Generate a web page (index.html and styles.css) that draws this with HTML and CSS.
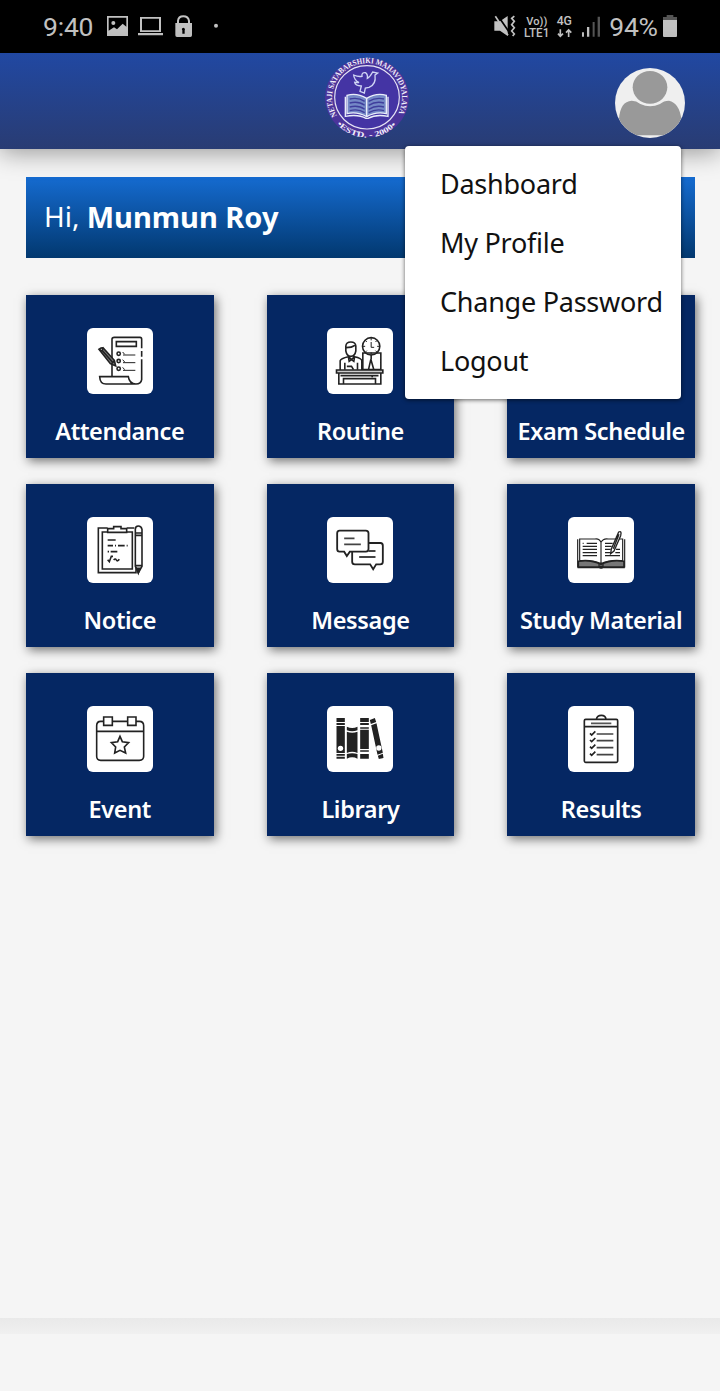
FILE: index.html
```html
<!DOCTYPE html>
<html lang="en">
<head>
<meta charset="utf-8">
<title>Student Dashboard</title>
<link rel="stylesheet" href="styles.css">
</head>
<body>
<div class="status">
  <span class="clock">9:40</span>
  <svg class="status-left" viewBox="300 0 360 156">
    <g fill="#c2c2c2">
      <path fill-rule="evenodd" d="M321 48H384V108H321ZM326 53V92L342 82L351 88L368 71L379 80V53Z"/>
      <circle cx="340" cy="69" r="6"/>
      <path fill-rule="evenodd" d="M420 51H483V96H420ZM426 56V91H477V56ZM414 99H489V106H414Z"/>
      <path fill-rule="evenodd" d="M526 69H531V62Q533 46 550 46T570 62V69H576V106Q576 111 571 111H531Q526 111 526 106ZM537 69H564V63Q562 52 550 52T537 63ZM547 91V101H554V91Q557 85 550 83Q543 85 547 91Z"/>
      <circle cx="648" cy="77" r="6"/>
    </g>
  </svg>
  <svg class="status-right" viewBox="30 0 340 156">
    <g fill="#c2c2c2">
      <path d="M43 64H60L83 48V108L60 92H43Z"/>
      <path d="M50 42L90 100" stroke="#000" stroke-width="5"/>
      <path d="M46 49L84 106" stroke="#c2c2c2" stroke-width="5"/>
      <path d="M103 48L95 55L103 64L95 74L103 83L95 93L103 102L98 108" fill="none" stroke="#c2c2c2" stroke-width="5"/>
      <text class="net" x="139" y="74" font-size="34" textLength="63" lengthAdjust="spacingAndGlyphs">Vo))</text>
      <text class="net" x="132" y="110" font-size="36" textLength="76" lengthAdjust="spacingAndGlyphs">LTE1</text>
      <text class="net" x="230" y="75" font-size="37" textLength="46" lengthAdjust="spacingAndGlyphs">4G</text>
      <path d="M241 88V108M234 101L241 109L249 101M266 111V91M258 98L266 90L274 98" fill="none" stroke="#c2c2c2" stroke-width="5"/>
      <path d="M306 97H312V110H306ZM321 81H328V110H321Z"/>
      <path fill="#555" d="M338 66H344V110H338ZM353 50H360V110H353Z"/>
    </g>
  </svg>
  <span class="percent">94%</span>
  <svg class="battery" viewBox="0 0 42 66"><path fill="#555" d="M11 0H31V6H42V17H0V6H11Z"/><path fill="#c2c2c2" d="M0 15H42V63Q42 66 39 66H3Q0 66 0 63Z"/></svg>
</div>

<header class="topbar">
  <svg class="logo" viewBox="42 20 258 246">
    <defs>
      <path id="arcTop" d="M81 196A105 104 0 1 1 261 196"/>
      <path id="arcBottom" d="M70 207A118 113 0 0 0 272 207"/>
    </defs>
    <ellipse cx="171" cy="142" rx="126" ry="119" fill="#4b349b"/>
    <ellipse cx="171" cy="141" rx="97" ry="95" fill="#4434a4" stroke="#e6e4f5" stroke-width="3.5"/>
    <text class="seal" font-size="24"><textPath href="#arcTop" textLength="432" lengthAdjust="spacingAndGlyphs">NETAJI SATABARSHIKI MAHAVIDYALAYA</textPath></text>
    <text class="seal" font-size="23"><textPath href="#arcBottom" startOffset="18" textLength="200" lengthAdjust="spacingAndGlyphs">•ESTD. - 2000•</textPath></text>
    <path d="M131 74Q144 80 156 78Q154 66 166 67Q174 72 172 84Q180 80 188 65L203 68L195 74Q199 103 177 111L166 113L163 128L150 123L154 107Q136 106 134 96L147 97Q132 88 131 74Z" fill="none" stroke="#cfd4f4" stroke-width="4"/>
    <path d="M111 135Q140 126 170 144Q200 126 229 135V190Q198 183 170 199Q142 183 111 190Z" fill="#7488c6" stroke="#e9edfa" stroke-width="4"/>
    <path d="M119 146Q145 140 164 153M119 158Q145 151 164 165M119 170Q145 163 164 177M119 181Q145 174 164 187M176 153Q198 140 222 146M176 165Q198 151 222 158M176 177Q198 163 222 170M176 187Q198 174 222 181" fill="none" stroke="#3f3e9c" stroke-width="4"/>
    <path d="M170 144V200M106 139V198Q145 191 168 204H174Q198 191 234 198V139" fill="none" stroke="#e9edfa" stroke-width="4"/>
  </svg>
  <div class="account">
    <svg class="avatar" viewBox="0 0 210 210">
      <clipPath id="face"><circle cx="105" cy="105" r="105"/></clipPath>
      <g clip-path="url(#face)"><rect width="210" height="210" fill="#efefef"/>
      <path d="M12 152Q16 100 50 98Q64 98 76 108Q105 122 135 108Q146 98 162 98Q192 104 199 152Q180 195 158 202H52Q22 184 12 152Z" fill="#999"/>
      <ellipse cx="105" cy="58" rx="52" ry="49" fill="#999"/></g>
    </svg>
    <nav class="menu">
      <a><span>Dashboard</span></a>
      <a><span>My Profile</span></a>
      <a><span>Change Password</span></a>
      <a><span>Logout</span></a>
    </nav>
  </div>
</header>

<main class="content">
  <div class="greeting">Hi,&nbsp;<b>Munmun Roy</b></div>
  <div class="grid">
    <section class="card">
      <svg class="icon" viewBox="21 22 198 198">
        <path d="M96 166V56Q96 50 103 50H180Q185 50 185 56V83M185 91V108M185 116V177Q183 190 168 190H78Q60 190 59 168H145Q148 190 168 190M109 63H169V77H109Z"/>
        <circle cx="116" cy="99" r="5"/><circle cx="116" cy="121" r="5"/><circle cx="116" cy="144" r="5"/>
        <path d="M129 103H166M129 126H166M129 149H166M128 94L134 101M128 117L134 124M128 140L134 147" stroke-width="3"/>
        <path class="shade" d="M57 86L69 81L103 119L107 136L91 129Z"/><path d="M62 84L99 126M94 130L104 120"/><circle cx="64" cy="86" r="4" fill="#fff"/>
      </svg><span>Attendance</span>
    </section>
    <section class="card">
      <svg class="icon" viewBox="22.5 22 198 198">
        <circle cx="155" cy="77" r="26"/><path d="M155 52V59M155 95V102M130 77H137M173 77H180M155 64V80H164M137 59L142 64M173 59L168 64M137 95L142 90M173 95L168 90" stroke-width="3"/>
        <path d="M79 76Q80 64 94 64T109 76V91Q106 107 94 107T79 91ZM80 81Q97 81 106 74M62 148V120Q64 113 86 108L96 117L105 108Q126 112 127 120V148M76 126V147M114 126V147M87 110L89 122L96 117L103 122L105 110M82 137H96L102 147"/>
        <path d="M130 97H184V147H130ZM147 147L154 116L163 147M155 116V102"/>
        <path fill="#ccc" d="M51 148H190V157H51Z"/><path d="M58 157V190H184V157M63 165H177M72 190V174H168V190M158 165V170"/>
      </svg><span>Routine</span>
    </section>
    <section class="card">
      <svg class="icon" viewBox="21 22 198 198"><path d="M72 52H168V190H72ZM88 80H150M88 105H150M88 130H150"/></svg><span>Exam Schedule</span>
    </section>
    <section class="card">
      <svg class="icon" viewBox="21 20 198 198">
        <path d="M83 53H55V187H168V171M140 53H163M83 65H67V176H157V65H140M83 66V55H101V49H123V55H140V66Z"/>
        <path d="M166 57Q166 47 175 47T186 57V168L175 188L166 168ZM166 68H186M166 75H186M166 166H186"/><path d="M171 174L180 174L175 188Z" fill="#222"/>
        <path d="M83 89H107M83 106H99M105 106H108M114 106H134M140 106H143M83 124H87M92 124H112M83 148L88 154L94 138H99M101 149Q106 143 109 149T118 147"/>
      </svg><span>Notice</span>
    </section>
    <section class="card">
      <svg class="icon" viewBox="22.5 20 198 198">
        <path d="M60 61H139Q147 61 147 69V116Q147 124 139 124H91L82 137L74 124H60Q53 124 53 116V69Q53 61 60 61ZM147 98H183Q190 98 190 106V154Q190 162 182 162H170L161 177L152 162H106Q98 162 98 154V124" stroke-width="5.5"/>
        <path d="M74 84H105M74 102H124M147 122H168M119 140H168" stroke="#444" stroke-width="5.5"/>
      </svg><span>Message</span>
    </section>
    <section class="card">
      <svg class="icon" viewBox="24 20 198 198">
        <path class="shade" d="M55 153Q90 146 123 162Q155 146 192 153V171H55Z"/>
        <path d="M53 87V170H117Q123 177 130 170H194V87M59 151V86H105Q118 84 123 96Q130 83 145 86H188V151M123 96V158M59 151Q100 148 123 160Q145 148 188 151M117 158H129V168H117Z" stroke-width="3.5"/>
        <path d="M68 99H71M80 99H111M68 108H111M68 117H111M68 127H111M68 136H111M135 99H158M135 108H155M135 117H152M168 117H180M135 127H152M166 127H180M135 136H180" stroke-width="3.5"/>
        <path fill="#fff" d="M176 65Q186 60 182 76L162 122L152 130L154 116ZM168 78L175 83M177 72L160 115" stroke-width="4"/>
      </svg><span>Study Material</span>
    </section>
    <section class="card">
      <svg class="icon" viewBox="21 18 198 198">
        <path d="M70 64H62Q50 64 50 77V169Q50 181 62 181H178Q191 181 191 169V77Q191 64 178 64H169M98 64H142M50 94H191M71 51H97V76H71ZM143 51H168V76H143Z"/>
        <path d="M120 109L127 125L146 128L133 141L137 159L120 151L104 159L107 141L94 128L113 125Z"/>
      </svg><span>Event</span>
    </section>
    <section class="card">
      <svg class="icon" viewBox="22.5 18 198 198">
        <g class="solid"><path d="M51 54H76V66H51ZM51 69H76V75H51ZM51 78H76V159H51ZM51 162H76V167H51ZM51 170H76V176H51Z"/><path d="M82 80Q98 88 114 80V91Q98 97 82 91ZM82 95Q98 101 114 95V159Q98 152 82 159ZM82 162Q98 157 114 162V176Q98 168 82 176Z"/><path d="M122 54H148V66H122ZM122 69H148V75H122ZM122 82H148V86H122ZM122 89H148V147H122ZM122 151H148V155H122ZM122 162H148V176H122Z"/><path d="M151 60L166 54L170 66L154 72ZM155 76L171 70L190 158L174 164ZM175 167L190 161L192 174L178 177Z"/></g>
        <circle cx="63" cy="145" r="8" fill="#fff" stroke="none"/><circle cx="178" cy="144" r="8" fill="#fff" stroke="none"/>
      </svg><span>Library</span>
    </section>
    <section class="card">
      <svg class="icon" viewBox="24 18 198 198">
        <path d="M77 58H169Q173 58 173 62V183Q173 187 169 187H77Q73 187 73 183V62Q73 58 77 58ZM73 80H173M109 58Q111 46 124 46T138 58" stroke-width="5"/>
        <path d="M93 70H154" stroke="#555"/><path d="M110 102H160M110 122H160M110 143H160M110 164H160" stroke="#444"/>
        <path d="M90 100L95 105L106 94M90 120L95 125L106 114M90 140L95 145L106 134M90 161L95 166L106 155" stroke-width="5"/>
      </svg><span>Results</span>
    </section>
  </div>
</main>
<footer class="footer"></footer>
</body>
</html>
```
FILE: styles.css
```css
* { box-sizing: border-box; }
body {
  margin: 0;
  width: 720px;
  height: 1391px;
  display: flex;
  flex-direction: column;
  overflow: hidden;
  background: #f5f5f5;
  font-family: "Noto Sans", "Open Sans", sans-serif;
}
.status {
  height: 52.5px;
  flex: none;
  display: flex;
  align-items: flex-start;
  padding-left: 43px;
  background: #000;
  color: #c2c2c2;
  font: 26.5px/52px Roboto, sans-serif;
}
.clock { width: 57px; padding-top: 1px; letter-spacing: -0.2px; }
.status-left { width: 120px; height: 52px; }
.status-right { width: 113.3px; height: 52px; margin-left: 270px; }
.percent { width: 53.7px; padding-top: 1px; margin-left: 6px; letter-spacing: -0.3px; }
.battery { width: 14px; height: 22px; margin-top: 15px; }
.net { font-family: Roboto, sans-serif; font-weight: 500; }
.seal { font-family: "Liberation Serif", serif; font-weight: bold; fill: #f0eefa; }

.topbar {
  height: 96.5px;
  flex: none;
  display: flex;
  justify-content: space-between;
  align-items: flex-start;
  padding: 4px 35px 0 324px;
  background: linear-gradient(#2148a2, #293c73);
  box-shadow: 0 3px 24px rgba(0, 0, 0, .4);
  position: relative;
  z-index: 2;
}
.logo { width: 86px; height: 82px; }
.account { position: relative; padding-top: 11.5px; }
.avatar { display: block; width: 70px; height: 70px; }
.menu {
  position: absolute;
  top: 89px;
  right: 4px;
  width: 276px;
  height: 253px;
  padding: 8px 0 0 35px;
  background: #fff;
  border-radius: 4px;
  box-shadow: 0 1px 4px rgba(0, 0, 0, .6);
  color: #111;
  font-size: 27px;
  letter-spacing: -0.25px;
}
.menu a { display: block; height: 59px; line-height: 59px; white-space: nowrap; }

.content { flex: none; height: 1169px; padding: 28px 25px 0 26px; }
.greeting {
  height: 81px;
  display: flex;
  align-items: center;
  padding: 0 0 3px 18px;
  color: #fff;
  font-size: 28px;
  background: linear-gradient(#156bd0, #02386f);
}
.greeting b { font-size: 29px; }
.grid {
  display: grid;
  grid-template-columns: repeat(3, 1fr);
  grid-auto-rows: 163.3px;
  gap: 25.8px 53px;
  margin-top: 36.5px;
}
.card {
  display: flex;
  flex-direction: column;
  align-items: center;
  padding-top: 33px;
  background: #052763;
  color: #fff;
  font-weight: 600;
  font-size: 23.5px;
  letter-spacing: -0.36px;
  line-height: 32px;
  white-space: nowrap;
  box-shadow: 2px 3px 10px rgba(0, 0, 0, .55);
}
.card span { margin-top: 21.3px; }
.icon {
  width: 66px;
  height: 66px;
  flex: none;
  border-radius: 6px;
  background: #fff;
  fill: none;
  stroke: #222;
  stroke-width: 4.8;
}
.icon .shade { fill: #777; }
.icon .solid { fill: #222; stroke: none; }
.footer { height: 16px; flex: none; background: linear-gradient(#e9e9e9, #f0f0f0); }
```
